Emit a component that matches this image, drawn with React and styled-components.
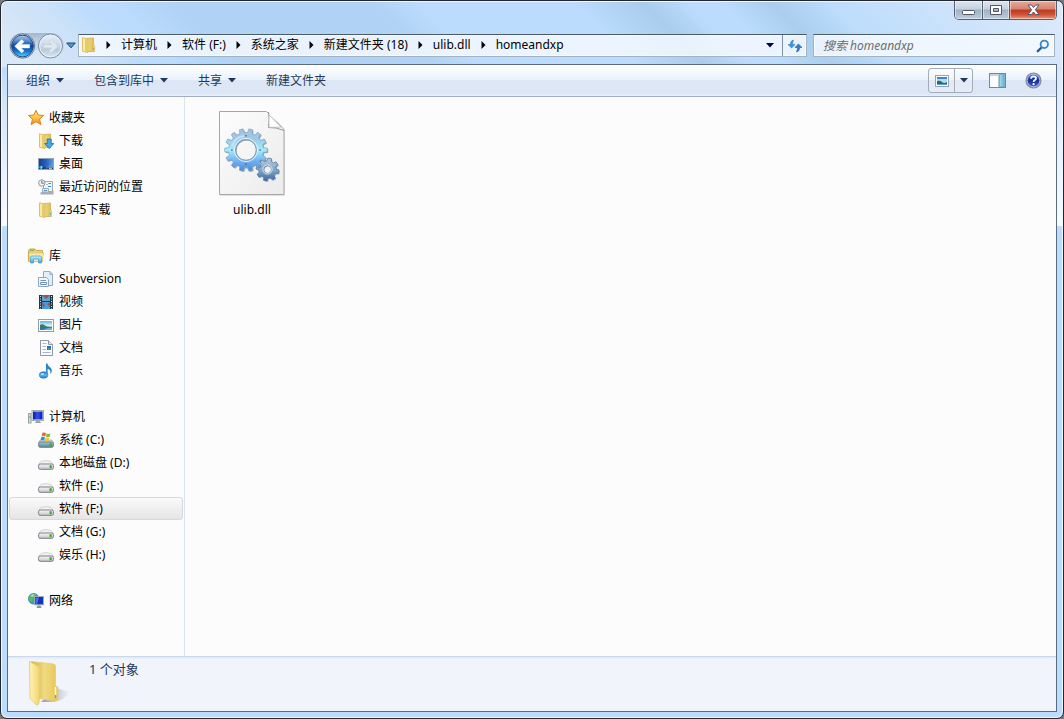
import React, { useId } from "react"
import styled, { createGlobalStyle, css, ThemeProvider } from "styled-components"

const theme = {
  font: '"Noto Sans", "Noto Sans CJK SC", sans-serif',
  colors: {
    frame: "#23262c",
    glass: "#bbdcfc",
    edge: "#5b6c80",
    text: "#000",
    commandText: "#1e395b",
    pane: "#fcfcfc",
    paneLine: "#d5e5f5",
    details: "#f1f5fb",
    muted: "#6d6d6d",
  },
}

const GlobalStyle = createGlobalStyle`
  * {
    box-sizing: border-box;
  }
  body {
    margin: 0;
    background: #77797c;
  }
  svg {
    display: block;
    flex: none;
  }
  button, input {
    font: inherit;
    color: inherit;
  }
  button {
    display: flex;
    align-items: center;
    margin: 0;
    padding: 0;
    border: 0;
    background: none;
    white-space: nowrap;
  }
`

// The first three layers are the slanted reflections behind the title and address bars,
// the last two whiten the side frames down to the middle of the window
const Window = styled.div`
  display: flex;
  flex-direction: column;
  min-height: 100vh;
  padding: 0 6px 6px;
  border: 1px solid ${({ theme }) => theme.colors.frame};
  border-radius: 7px;
  box-shadow: inset 0 0 0 1px #eef7ff;
  color: ${({ theme }) => theme.colors.text};
  font-family: ${({ theme }) => theme.font};
  font-size: 12px;
  line-height: 18px;
  background:
    linear-gradient(45deg, rgba(222, 233, 245, 0.85) 25px, rgba(214, 230, 247, 0.55) 75px, transparent 105px) 0 0 / 100% 66px no-repeat,
    linear-gradient(45deg, transparent 125px, rgba(168, 203, 240, 0.55) 165px, rgba(168, 203, 240, 0.55) 310px, transparent 340px, transparent 450px, rgba(160, 197, 228, 0.65) 500px, transparent 530px, transparent 555px, rgba(160, 197, 228, 0.6) 590px, transparent 630px) 0 0 / 100% 66px no-repeat,
    linear-gradient(45deg, transparent 620px, rgba(222, 234, 250, 0.85) 770px) 0 0 / 100% 66px no-repeat,
    linear-gradient(rgba(222, 234, 250, 0) 66px, rgba(222, 234, 250, 0.8) 110px, #f8fbff) 0 0 / 7px 225px no-repeat,
    linear-gradient(rgba(222, 234, 250, 0) 60px, rgba(222, 234, 250, 0.85) 70px, #f8fbff) 100% 0 / 7px 225px no-repeat,
    ${({ theme }) => theme.colors.glass};
`

const TitleBar = styled.header`
  display: flex;
  justify-content: flex-end;
  align-items: flex-start;
  height: 33px;
`

const WindowControls = styled.div`
  display: flex;
  height: 19px;
  border: 1px solid #536071;
  border-top: 0;
  border-radius: 0 0 5px 5px;
  overflow: hidden;
`

const WindowButton = styled.button`
  justify-content: center;
  width: ${({ $close }) => ($close ? "47px" : "27px")};
  background: linear-gradient(#dde7f2, #c3d0de 45%, #9fb0c4 50%, #bccddf);
  box-shadow: inset 0 0 0 1px rgba(255, 255, 255, 0.45);
  & + & {
    border-left: 1px solid #536071;
  }
  ${({ $close }) =>
    $close &&
    css`
      background: linear-gradient(#e8aa9e, #d6836f 45%, #b83a22 50%, #cf5138 75%, #e79c76);
    `}
`

const NavigationBar = styled.nav`
  display: flex;
  align-items: center;
  height: 23px;
  margin-bottom: 7px;
  padding: 0 2px;
`

const HistoryButtons = styled.div`
  display: flex;
  align-items: center;
  height: 26px;
  margin-right: 2px;
`

const ButtonPod = styled.div`
  display: flex;
  gap: 1px;
  border-radius: 13px;
  background: linear-gradient(#a3b8ce, #bccfe2 30%, #c9dcee 65%, transparent 65%);
`

const RoundButton = styled.button`
  justify-content: center;
  width: 27px;
  height: 26px;
`

const HistoryMenu = styled.button`
  width: 10px;
  height: 20px;
  margin-left: 2px;
`

const AddressBar = styled.div`
  display: flex;
  flex: 1;
  align-items: stretch;
  min-width: 0;
  height: 23px;
  border: 1px solid #a3b3c4;
  border-top-color: #4b5a69;
  background: rgba(250, 253, 255, 0.78);
  box-shadow: inset 0 0 0 1px rgba(255, 255, 255, 0.6);
`

const Breadcrumbs = styled.div`
  display: flex;
  flex: 1;
  align-items: center;
  min-width: 0;
  padding: 0 0 2px 2px;
  overflow: hidden;
`

const CrumbArrow = styled.span`
  margin: 0 10px;
  ${({ $first }) => $first && "margin-left: 9px;"}
`

const BarButton = styled.button`
  justify-content: center;
  width: 24px;
  ${({ $divided }) => $divided && "border-left: 1px solid #7e8fa2;"}
`

const SearchBox = styled.label`
  display: flex;
  align-items: center;
  width: 242px;
  height: 23px;
  margin-left: 6px;
  padding: 0 4px 0 9px;
  border: 1px solid #a3b3c4;
  border-top-color: #4b5a69;
  background: rgba(250, 253, 255, 0.78);
  box-shadow: inset 0 0 0 1px rgba(255, 255, 255, 0.6);
`

const SearchInput = styled.input`
  flex: 1;
  min-width: 0;
  height: 18px;
  padding: 0;
  border: 0;
  outline: 0;
  background: none;
  &::placeholder {
    color: ${({ theme }) => theme.colors.muted};
    font-style: italic;
    opacity: 1;
  }
`

const Client = styled.div`
  display: flex;
  flex: 1;
  flex-direction: column;
  border: 1px solid ${({ theme }) => theme.colors.edge};
  background: ${({ theme }) => theme.colors.pane};
`

const Toolbar = styled.div`
  display: flex;
  align-items: center;
  height: 32px;
  padding: 0 14px 0 18px;
  border-bottom: 1px solid #a0afc3;
  color: ${({ theme }) => theme.colors.commandText};
  background: linear-gradient(#fff, #e9f2fc 48%, #dce6f4 50%, #dde7f5 94%, #eaf2fb);
`

const Command = styled.button`
  gap: 6px;
  margin-right: 30px;
`

const ViewSplit = styled.div`
  display: flex;
  height: 25px;
  margin-left: auto;
  border: 1px solid #a4acb8;
  border-radius: 3px;
  background: linear-gradient(#fbfdff, #edf3fa 50%, #e2eaf5 50%, #e4ecf7);
`

const ViewButton = styled.button`
  justify-content: center;
  width: ${({ $narrow }) => ($narrow ? "18px" : "25px")};
  ${({ $narrow }) => $narrow && "border-left: 1px solid #a4acb8;"}
`

const ToolButton = styled.button`
  margin-left: ${({ $wide }) => ($wide ? "19px" : "16px")};
`

const Body = styled.div`
  display: flex;
  flex: 1;
`

const Sidebar = styled.aside`
  display: flex;
  flex-direction: column;
  gap: 23px;
  width: 177px;
  padding: 9px 1px;
  border-right: 1px solid ${({ theme }) => theme.colors.paneLine};
`

const Tree = styled.ul`
  margin: 0;
  padding: 0;
  list-style: none;
`

const TreeLink = styled.a`
  display: flex;
  align-items: center;
  gap: 5px;
  height: 23px;
  padding-left: ${({ $root }) => ($root ? "18px" : "28px")};
  border: 1px solid transparent;
  border-radius: 3px;
  color: inherit;
  text-decoration: none;
  white-space: nowrap;
  ${({ $selected }) =>
    $selected &&
    css`
      border-color: #d9d9d9;
      background: linear-gradient(#fafafa, #e5e5e5);
    `}
`

const FileView = styled.main`
  display: flex;
  flex: 1;
  flex-wrap: wrap;
  align-content: flex-start;
  padding: 13px 20px;
`

const FileItem = styled.button`
  flex-direction: column;
  gap: 4px;
  width: 94px;
`

const DetailsPane = styled.footer`
  display: flex;
  align-items: flex-start;
  gap: 17px;
  height: 55px;
  padding: 3px 20px;
  border-top: 1px solid #c9d9eb;
  background: ${({ theme }) => theme.colors.details};
  box-shadow: inset 0 3px 3px -2px #dde8f4;
  color: ${({ theme }) => theme.colors.commandText};
  font-size: 13px;
`

const DetailsText = styled.p`
  margin: 0;
`

const Svg = ({ w = 16, h = w, children }) => (
  <svg width={w} height={h} viewBox={`0 0 ${w} ${h}`} aria-hidden="true">
    {children}
  </svg>
)

// Vertical gradient shared by most of the icons, flat turns it sideways
const Fade = ({ id, stops, flat }) => (
  <linearGradient id={id} x1="0" y1="0" x2={flat ? 1 : 0} y2={flat ? 0 : 1}>
    {stops.map((color, i) => (
      <stop key={i} offset={i / (stops.length - 1)} stopColor={color} />
    ))}
  </linearGradient>
)

const DownArrow = ({ color = "#1e395b" }) => (
  <Svg w={8} h={5}>
    <path d="M0 0H8L4 4.5Z" fill={color} />
  </Svg>
)

const BackIcon = () => (
  <Svg w={27} h={26}>
    <defs>
      <Fade id="back" stops={["#a9c9ec", "#5c8fd0", "#0a44a0", "#1478d2", "#52d6fa"]} />
    </defs>
    <circle cx="13.5" cy="13" r="12.2" fill="#dce9f5" stroke="#6a7b91" />
    <circle cx="13.5" cy="13" r="10.9" fill="url(#back)" stroke="#24477e" strokeWidth="1" />
    <path d="M5.7 13.2 12.8 6.6 15 8.8 12.2 11.5H20.6V15H12.2L15 17.7 12.8 19.9Z" fill="#fff" stroke="#e7f2ff" strokeWidth=".5" />
  </Svg>
)

const ForwardIcon = () => (
  <Svg w={27} h={26}>
    <defs>
      <Fade id="forward" stops={["#e4eef7", "#d3e0ed", "#b9cbdd", "#dce9f4"]} />
    </defs>
    <circle cx="13.5" cy="13" r="12" fill="url(#forward)" stroke="#7e8fa3" />
    <circle cx="13.5" cy="13" r="10.8" fill="none" stroke="#e7f1fa" />
    <path d="M21.3 13.2 14.2 6.6 12 8.8 14.8 11.5H6.4V15H14.8L12 17.7 14.2 19.9Z" fill="#dfe8f0" stroke="#c0cedb" strokeWidth=".7" />
  </Svg>
)

const FolderIcon = ({ arrow }) => {
  const id = useId()
  return (
    <Svg>
      <defs>
        <Fade id={id} flat stops={["#f0dc88", "#e2bf4c"]} />
      </defs>
      <path d="M6 1.5 12.5 1V14.5H6Z" fill={`url(#${id})`} stroke="#cfa944" strokeWidth=".7" />
      <path d="M1.5 .8 6.8 2V15.6L1.5 14.2Z" fill="#faeba4" stroke="#d4b352" strokeWidth=".8" />
      <path d="M5 2.2V14.8" stroke="#e5c967" strokeWidth="1.8" />
      {!arrow && <path d="M11.5 8.5H13.7V14.5H11.5Z" fill="#f5e08a" stroke="#cfa944" strokeWidth=".5" />}
      {!arrow && <path d="M12.6 10.5V13.5" stroke="#5db0e4" />}
      {arrow && <path d="M9.2 6H13.2V10.5H15.8L11.2 15.6 6.6 10.5H9.2Z" fill="#42a6ea" stroke="#1668ae" strokeWidth=".8" />}
    </Svg>
  )
}

const StarIcon = () => (
  <Svg>
    <defs>
      <Fade id="star" stops={["#fff0a0", "#ffc63a", "#f58a1e"]} />
    </defs>
    <path d="M8 .3 10.2 5 15.5 5.5 11.5 9.2 12.9 14.6 8 11.7 3.1 14.6 4.5 9.2.5 5.5 5.8 5Z" fill="url(#star)" stroke="#dc7d2c" strokeLinejoin="round" />
  </Svg>
)

const DesktopIcon = () => (
  <Svg>
    <defs>
      <Fade id="desktop" flat stops={["#173f94", "#2860b9", "#5f9ae2"]} />
    </defs>
    <rect x=".5" y="2.5" width="15" height="11" fill="url(#desktop)" stroke="#8fa4b9" />
    <path d="M1 11.5H15V13H1Z" fill="#182d4f" />
    <path d="M6 13 15 7V12Z" fill="#6aa1e1" opacity=".45" />
    <circle cx="3" cy="11.3" r="1.6" fill="#2bb9d8" />
    <path d="M3.5 10V12.6" stroke="#f3cf35" />
    <path d="M11 12.3H14" stroke="#c9d9ed" />
  </Svg>
)

const RecentIcon = () => (
  <Svg>
    <path d="M5.5 2.5H14.5V12.5H5.5Z" fill="#f3f6f8" stroke="#a2a8ae" />
    <path d="M8.5 5.5H9.5M10.5 4.5H13M10 7.5H13" stroke="#3b8ed2" />
    <path d="M4.5 9.5H10.5V13.5H4.5Z" fill="#dfeaf4" stroke="#a3adb7" />
    <path d="M2.5 15.5V13.5L5 12.5H14L15.5 11.5V15.5Z" fill="#a6adb5" />
    <path d="M6 11.5H9" stroke="#4a98d2" />
    <circle cx="3.8" cy="4" r="3.2" fill="#eef3f6" stroke="#929a9f" />
    <path d="M3.8 1.8V4.2H5.8" stroke="#56616a" fill="none" strokeWidth=".9" />
  </Svg>
)

const LibraryIcon = () => (
  <Svg>
    <defs>
      <Fade id="library" stops={["#c7efff", "#45a4d9"]} />
    </defs>
    <path d="M.5 2.5 1.5 1H7L8 2.5H14.5V13.5H.5Z" fill="#eed17a" stroke="#cda850" />
    <path d="M2 2.3H6" stroke="#53b747" />
    <path d="M1 5H15.5L14.5 13.5H1.5Z" fill="#faecac" stroke="#dcba65" strokeWidth=".6" />
    <path d="M2.5 15V9.5Q2.5 8 4 8H12Q13.5 8 13.5 9.5V15H10.5V11H5.5V15Z" fill="url(#library)" stroke="#3d9bd0" strokeWidth=".7" />
  </Svg>
)

const SubversionIcon = () => (
  <Svg>
    <path d="M5.5.5H12L14.5 3V14.5H5.5Z" fill="#e4eef8" stroke="#94aac2" />
    <path d="M12 .5V3.5H14.5" fill="none" stroke="#94aac2" />
    <path d="M.5 6.5H8.5L10.5 8.5V15.5H.5Z" fill="#f0f6fc" stroke="#8fa9c5" />
    <path d="M2.5 9.5H8M2.5 11.5H8.5V13.5H2.5Z" fill="none" stroke="#7292be" />
  </Svg>
)

const VideoIcon = () => (
  <Svg>
    <rect x="1" y="1" width="14" height="14" fill="#263844" />
    <rect x="4" y="1" width="8" height="6" fill="#53a6dc" />
    <rect x="4" y="8" width="8" height="7" fill="#4a9ddd" />
    <path d="M4 1 8 5 12 1ZM4 8 7 11 5 14ZM12 8 9 10 12 13Z" fill="#9d5348" />
    <path d="M2.5 2V15M13.5 2V15" stroke="#dce7eb" strokeDasharray="1 1.5" />
  </Svg>
)

const PictureIcon = () => (
  <Svg>
    <defs>
      <Fade id="picture" stops={["#69b0e6", "#d8f1fa", "#b7dfce"]} />
    </defs>
    <rect x=".5" y="2.5" width="15" height="12" fill="#fff" stroke="#929aa4" />
    <rect x="2" y="4" width="12" height="9" fill="url(#picture)" />
    <path d="M2 8Q4 6.5 7 8.5T14 9.5V11H2Z" fill="#2d8062" />
    <path d="M2 10.8H14V13H2Z" fill="#2b78ae" />
    <path d="M5 13Q9 10.5 14 10.5V13Z" fill="#63b7d2" />
  </Svg>
)

const DocumentIcon = () => (
  <Svg>
    <path d="M2.5.5H10.5L14.5 4.5V15.5H2.5Z" fill="#fbfcfe" stroke="#8e98a4" />
    <path d="M10.5.5V4.5H14.5" fill="#dfe6ed" stroke="#8e98a4" />
    <path d="M4.5 3.5H8.5M4.5 6.5H8M4.5 9.5H8M4.5 12.5H12.5" stroke="#a9b4d2" />
    <rect x="9" y="6" width="4" height="4" fill="#286bb6" />
    <path d="M9 9 11 7.5 13 10Z" fill="#55a48e" />
  </Svg>
)

const MusicIcon = () => (
  <Svg>
    <defs>
      <Fade id="music" stops={["#246fba", "#55baf0", "#1c77c6"]} />
    </defs>
    <path d="M8 .5H9.5C9.8 4 14.5 4.4 13.8 8.2 13.5 9.7 12.8 10.3 12 11 13.2 7.8 11.8 6.5 9.6 6V12H8Z" fill="#2c83c9" />
    <ellipse cx="5.6" cy="12" rx="4.3" ry="3.2" fill="url(#music)" stroke="#2a79b7" strokeWidth=".6" />
    <ellipse cx="4.5" cy="11" rx="1.8" ry="1" fill="#a4e0fa" />
  </Svg>
)

const ComputerIcon = () => (
  <Svg>
    <defs>
      <Fade id="screen" flat stops={["#0a1da8", "#2c55ed", "#0718a2"]} />
    </defs>
    <rect x=".5" y="4.5" width="2.5" height="9.5" fill="#d1d7dc" stroke="#9ba2a9" />
    <path d="M2 7V9" stroke="#4ab657" />
    <rect x="4" y="1.5" width="11.5" height="10" fill="#e9eef2" stroke="#a3acb4" />
    <rect x="5" y="2.5" width="9.5" height="8" fill="url(#screen)" />
    <path d="M8.5 12H11.5L13.5 14H6.5Z" fill="#9ba4ac" />
  </Svg>
)

const DriveIcon = ({ system }) => {
  const id = useId()
  return (
    <Svg>
      <defs>
        <Fade id={id} stops={system ? ["#a3c8cf", "#4f8798"] : ["#f9f9fa", "#c3c4c9"]} />
      </defs>
      <path d={system ? "M2 8H14L15.5 11H.5Z" : "M3 6.5Q8 4.5 13 6.5L15.3 9.5H.7Z"} fill={system ? "#c7d4d9" : "#f2f2f3"} stroke={system ? "#9fb2bb" : "#c5c5c8"} strokeWidth=".7" />
      <rect x=".6" y={system ? 10 : 9} width="14.8" height="5.3" rx="1.6" fill={`url(#${id})`} stroke="#7c7e84" strokeWidth="1" />
      <rect x="11.5" y={system ? 11.2 : 10.2} width="2.3" height="3" fill="#3fae2d" />
      {system && (
        <>
          <path d="M4.5.8Q6.4 0 8 1.2L7.2 4.4Q5.4 3.4 3.6 4.2Z" fill="#ec612d" />
          <path d="M8.7 1.4Q10.6 2.4 12.4 1.5L11.5 4.7Q9.8 5.6 7.9 4.7Z" fill="#7db938" />
          <path d="M3.4 5Q5.2 4.2 7 5.2L6.1 8.5Q4.4 7.5 2.5 8.3Z" fill="#348dd8" />
          <path d="M7.7 5.5Q9.6 6.4 11.3 5.5L10.4 8.8Q8.7 9.7 6.8 8.8Z" fill="#f7c72c" />
        </>
      )}
    </Svg>
  )
}

const NetworkIcon = () => (
  <Svg>
    <circle cx="5.7" cy="5.8" r="5.3" fill="#2b9fd9" stroke="#2678b4" strokeWidth=".7" />
    <path d="M2 2.5Q5 0 8 1L7 4 4.5 5 5 8 3 9Q0 7 1 4ZM8.5 5 11 5 9 8Z" fill="#59bf4e" />
    <path d="M3 2.4Q5 1 6.5 1.6L4 4Z" fill="#d0f2cb" />
    <rect x="6.5" y="3.5" width="9" height="8.3" fill="#1534be" stroke="#a0aebb" />
    <path d="M7.5 4.5H11L9 11H7.5Z" fill="#4872e9" />
    <path d="M9.5 12.5H12.5L13.5 15H8.5Z" fill="#8693a1" />
  </Svg>
)

const RefreshIcon = () => (
  <Svg w={16} h={14}>
    <path d="M6.5 1Q3.5 1.5 3.3 5.5H1L4.6 9 8 5.5H5.5Q5.5 3 6.5 1Z" fill="#3c94dc" stroke="#2f7cc6" strokeWidth=".6" />
    <path d="M9.5 13Q12.5 12.5 12.7 8.5H15L11.4 5 8 8.5H10.5Q10.5 11 9.5 13Z" fill="#2e7ecb" stroke="#225fa9" strokeWidth=".6" />
  </Svg>
)

const SearchIcon = () => (
  <Svg w={14}>
    <path d="M6 8 1.8 12.2" stroke="#2a5ca9" strokeWidth="2.4" strokeLinecap="round" />
    <circle cx="8.3" cy="5.3" r="3.7" fill="#edf7ff" stroke="#3b86c8" strokeWidth="1.8" />
  </Svg>
)

const PreviewPaneIcon = () => (
  <Svg w={17} h={15}>
    <defs>
      <Fade id="preview" flat stops={["#a5e2ee", "#56b3cb"]} />
    </defs>
    <rect x=".5" y=".5" width="16" height="14" fill="#fcfdfe" stroke="#74879c" />
    <path d="M1 1H16V3H1Z" fill="#c6d2df" />
    <rect x="10.5" y="1.5" width="5" height="12" fill="url(#preview)" stroke="#7fb3ca" />
    <path d="M9.5 3V14" stroke="#b8c6d4" />
  </Svg>
)

const HelpIcon = () => (
  <Svg w={17}>
    <defs>
      <Fade id="help" stops={["#526fd1", "#152f96", "#4368d2"]} />
    </defs>
    <circle cx="8.5" cy="8.5" r="7.4" fill="url(#help)" stroke="#858f9e" strokeWidth="1.4" />
    <circle cx="8.5" cy="8.5" r="6.3" fill="none" stroke="#d8dfed" strokeWidth=".8" />
    <path d="M6 6.6Q6.3 4.4 8.6 4.4 11 4.4 11 6.4 11 7.6 9.6 8.3 8.6 8.8 8.6 10" fill="none" stroke="#fff" strokeWidth="1.7" />
    <circle cx="8.6" cy="12.2" r="1.1" fill="#fff" />
  </Svg>
)

const ThumbnailIcon = () => (
  <Svg w={14} h={12}>
    <rect x=".5" y=".5" width="13" height="11" fill="#fff" stroke="#9aa3ad" />
    <rect x="2" y="2" width="10" height="8" fill="#b2daf2" />
    <path d="M2 2H12V4H2Z" fill="#3e86ca" />
    <path d="M2 6Q5 5 7 7T12 7V10H2Z" fill="#286e63" />
    <path d="M2 9.5H12" stroke="#5ba2ce" />
  </Svg>
)

// Walks round the circle and lifts the rim once for every tooth
const gearPath = (cx, cy, outer, inner, hole, teeth, turn = 0) => {
  const step = (Math.PI * 2) / teeth
  const at = (r, a) => `${(cx + r * Math.cos(a)).toFixed(2)} ${(cy + r * Math.sin(a)).toFixed(2)}`
  let d = ""
  for (let i = 0; i < teeth; i++) {
    const a = i * step + turn
    d += `${i ? "L" : "M"}${at(inner, a - step * 0.3)}L${at(outer, a - step * 0.2)}L${at(outer, a + step * 0.2)}L${at(inner, a + step * 0.3)}`
  }
  return `${d}ZM${cx - hole} ${cy}a${hole} ${hole} 0 1 0 ${hole * 2} 0a${hole} ${hole} 0 1 0 ${-hole * 2} 0Z`
}

const DllIcon = () => (
  <Svg w={68} h={87}>
    <defs>
      <linearGradient id="sheet" x1="0" y1="0" x2="1" y2="1">
        <stop offset="0" stopColor="#fdfdfd" />
        <stop offset="1" stopColor="#ebebeb" />
      </linearGradient>
      <Fade id="gear" stops={["#a9bedb", "#9ccbea", "#a5ecfc", "#71b4f3", "#4a88d8"]} />
      <Fade id="cog" stops={["#b6c9dc", "#86abd0", "#38679e"]} />
    </defs>
    <path d="M2 2H50L67 19V86H2Z" fill="#000" opacity=".1" />
    <path d="M1.5 1.5H48.5Q53 6 57 10T66 20V84.5H1.5Z" fill="url(#sheet)" stroke="#a7a7a7" />
    <path d="M50.5 2Q52 9 50.5 17.5 58 17 66 20.5" fill="#f8f8f8" stroke="#999" />
    <path d="M51 17.5 63 17 51 5Z" fill="#fff" stroke="#aaa" strokeWidth=".7" />
    <path d={gearPath(50.5, 60.5, 11.5, 8.8, 4, 8, 0.2)} fillRule="evenodd" fill="#5c6c7c" opacity=".5" />
    <path d={gearPath(49.5, 59.5, 11.5, 8.8, 4, 8, 0.2)} fillRule="evenodd" fill="url(#cog)" stroke="#537ca8" strokeWidth=".8" />
    <circle cx="49.5" cy="59.5" r="4.6" fill="none" stroke="#dbe8f2" />
    <path d={gearPath(29, 41, 21.3, 17.5, 10.5, 14)} fillRule="evenodd" fill="#4c5c6c" opacity=".5" />
    <path d={gearPath(28, 40, 21.3, 17.5, 10.5, 14)} fillRule="evenodd" fill="url(#gear)" stroke="#7da2c8" strokeWidth=".7" />
    <circle cx="28" cy="40" r="11.6" fill="none" stroke="#e2f6fc" strokeWidth="1" />
    <circle cx="28" cy="40" r="10.3" fill="none" stroke="#8a9cae" strokeWidth="1" />
    <path d="M28 25V26.4M28 53.6V55M13.2 40H14.6M41.4 40H42.8" stroke="#42688e" strokeWidth="1.4" />
    <path d="M14 36Q17 27 26 26" stroke="#d5eaf8" strokeWidth="2" fill="none" opacity=".7" />
  </Svg>
)

const BigFolderIcon = () => (
  <Svg w={44} h={48}>
    <defs>
      <Fade id="leaf" flat stops={["#fff4b8", "#f7e391", "#efd26c"]} />
      <Fade id="inside" flat stops={["#cfae4d", "#f0da82", "#e6c451"]} />
      <linearGradient id="cast" x1="0" x2="1">
        <stop offset="0" stopColor="#68717c" stopOpacity=".65" />
        <stop offset="1" stopColor="#68717c" stopOpacity="0" />
      </linearGradient>
    </defs>
    <path d="M13 42 28 28 42 32Q37 40 26 42Z" fill="url(#cast)" />
    <path d="M3 1.5 25.5 4Q27 4 27.5 6V26L30 27V39Q29 41 26.5 41L9 38Z" fill="url(#inside)" stroke="#e7cc72" strokeWidth=".8" />
    <path d="M1.5 1.5 10 6Q12 7 12 9V28L11 43Q10 46 8 44.5L2 38.5Z" fill="url(#leaf)" stroke="#e3c76b" strokeWidth=".8" />
    <path d="M27.5 27V38" stroke="#fffbe4" strokeWidth="1.5" />
    <path d="M27.5 35V38" stroke="#5c9fcb" strokeWidth="1.5" />
  </Svg>
)

const crumbs = ["计算机", "软件 (F:)", "系统之家", "新建文件夹 (18)", "ulib.dll", "homeandxp"]

const commands = [
  { label: "组织", menu: true },
  { label: "包含到库中", menu: true },
  { label: "共享", menu: true },
  { label: "新建文件夹" },
]

const groups = [
  {
    label: "收藏夹",
    icon: <StarIcon />,
    items: [
      { label: "下载", icon: <FolderIcon arrow /> },
      { label: "桌面", icon: <DesktopIcon /> },
      { label: "最近访问的位置", icon: <RecentIcon /> },
      { label: "2345下载", icon: <FolderIcon /> },
    ],
  },
  {
    label: "库",
    icon: <LibraryIcon />,
    items: [
      { label: "Subversion", icon: <SubversionIcon /> },
      { label: "视频", icon: <VideoIcon /> },
      { label: "图片", icon: <PictureIcon /> },
      { label: "文档", icon: <DocumentIcon /> },
      { label: "音乐", icon: <MusicIcon /> },
    ],
  },
  {
    label: "计算机",
    icon: <ComputerIcon />,
    items: [
      { label: "系统 (C:)", icon: <DriveIcon system /> },
      { label: "本地磁盘 (D:)", icon: <DriveIcon /> },
      { label: "软件 (E:)", icon: <DriveIcon /> },
      { label: "软件 (F:)", icon: <DriveIcon />, selected: true },
      { label: "文档 (G:)", icon: <DriveIcon /> },
      { label: "娱乐 (H:)", icon: <DriveIcon /> },
    ],
  },
  { label: "网络", icon: <NetworkIcon />, items: [] },
]

const Controls = () => (
  <WindowControls>
    <WindowButton aria-label="最小化">
      <Svg w={13} h={12}>
        <rect x=".5" y="6.5" width="12" height="4" rx="1" fill="#fff" stroke="#535666" />
      </Svg>
    </WindowButton>
    <WindowButton aria-label="最大化">
      <Svg w={12} h={10}>
        <path d="M.5.5H11.5V9.5H.5ZM3.5 3.5V6.5H8.5V3.5Z" fill="#fff" fillRule="evenodd" stroke="#535666" />
      </Svg>
    </WindowButton>
    <WindowButton $close aria-label="关闭">
      <Svg w={13} h={12}>
        <path d="M1 1H4.4L6.5 3.5 8.6 1H12L8.4 5.8 12 10.5H8.6L6.5 8 4.4 10.5H1L4.6 5.8Z" fill="#fff" stroke="#535666" />
      </Svg>
    </WindowButton>
  </WindowControls>
)

const App = () => (
  <ThemeProvider theme={theme}>
    <GlobalStyle />
    <Window>
      <TitleBar>
        <Controls />
      </TitleBar>
      <NavigationBar>
        <HistoryButtons>
          <ButtonPod>
            <RoundButton aria-label="后退">
              <BackIcon />
            </RoundButton>
            <RoundButton aria-label="前进">
              <ForwardIcon />
            </RoundButton>
          </ButtonPod>
          <HistoryMenu aria-label="最近的页面">
            <Svg w={10} h={7}>
              <path d="M.7 1H9.3L5 5.8Z" fill="#4b9bd0" stroke="#1c4770" />
            </Svg>
          </HistoryMenu>
        </HistoryButtons>
        <AddressBar>
          <Breadcrumbs>
            <FolderIcon />
            {crumbs.map((crumb, i) => (
              <React.Fragment key={crumb}>
                <CrumbArrow $first={i === 0}>
                  <Svg w={5} h={8}>
                    <path d="M.5 0 4.5 4 .5 8Z" fill="#000" />
                  </Svg>
                </CrumbArrow>
                <button>{crumb}</button>
              </React.Fragment>
            ))}
          </Breadcrumbs>
          <BarButton aria-label="以前的位置">
            <DownArrow color="#00004e" />
          </BarButton>
          <BarButton $divided aria-label="刷新">
            <RefreshIcon />
          </BarButton>
        </AddressBar>
        <SearchBox>
          <SearchInput type="text" aria-label="搜索" placeholder="搜索 homeandxp" />
          <SearchIcon />
        </SearchBox>
      </NavigationBar>
      <Client>
        <Toolbar>
          {commands.map(({ label, menu }) => (
            <Command key={label}>
              {label}
              {menu && <DownArrow />}
            </Command>
          ))}
          <ViewSplit>
            <ViewButton aria-label="更改您的视图">
              <ThumbnailIcon />
            </ViewButton>
            <ViewButton $narrow aria-label="更多选项">
              <DownArrow />
            </ViewButton>
          </ViewSplit>
          <ToolButton aria-label="显示预览窗格">
            <PreviewPaneIcon />
          </ToolButton>
          <ToolButton $wide aria-label="获取帮助">
            <HelpIcon />
          </ToolButton>
        </Toolbar>
        <Body>
          <Sidebar>
            {groups.map(({ label, icon, items }) => (
              <Tree key={label}>
                <li>
                  <TreeLink $root href="#">
                    {icon}
                    {label}
                  </TreeLink>
                </li>
                {items.map(item => (
                  <li key={item.label}>
                    <TreeLink href="#" $selected={item.selected}>
                      {item.icon}
                      {item.label}
                    </TreeLink>
                  </li>
                ))}
              </Tree>
            ))}
          </Sidebar>
          <FileView>
            <FileItem>
              <DllIcon />
              ulib.dll
            </FileItem>
          </FileView>
        </Body>
        <DetailsPane>
          <BigFolderIcon />
          <DetailsText>1 个对象</DetailsText>
        </DetailsPane>
      </Client>
    </Window>
  </ThemeProvider>
)

export default App
